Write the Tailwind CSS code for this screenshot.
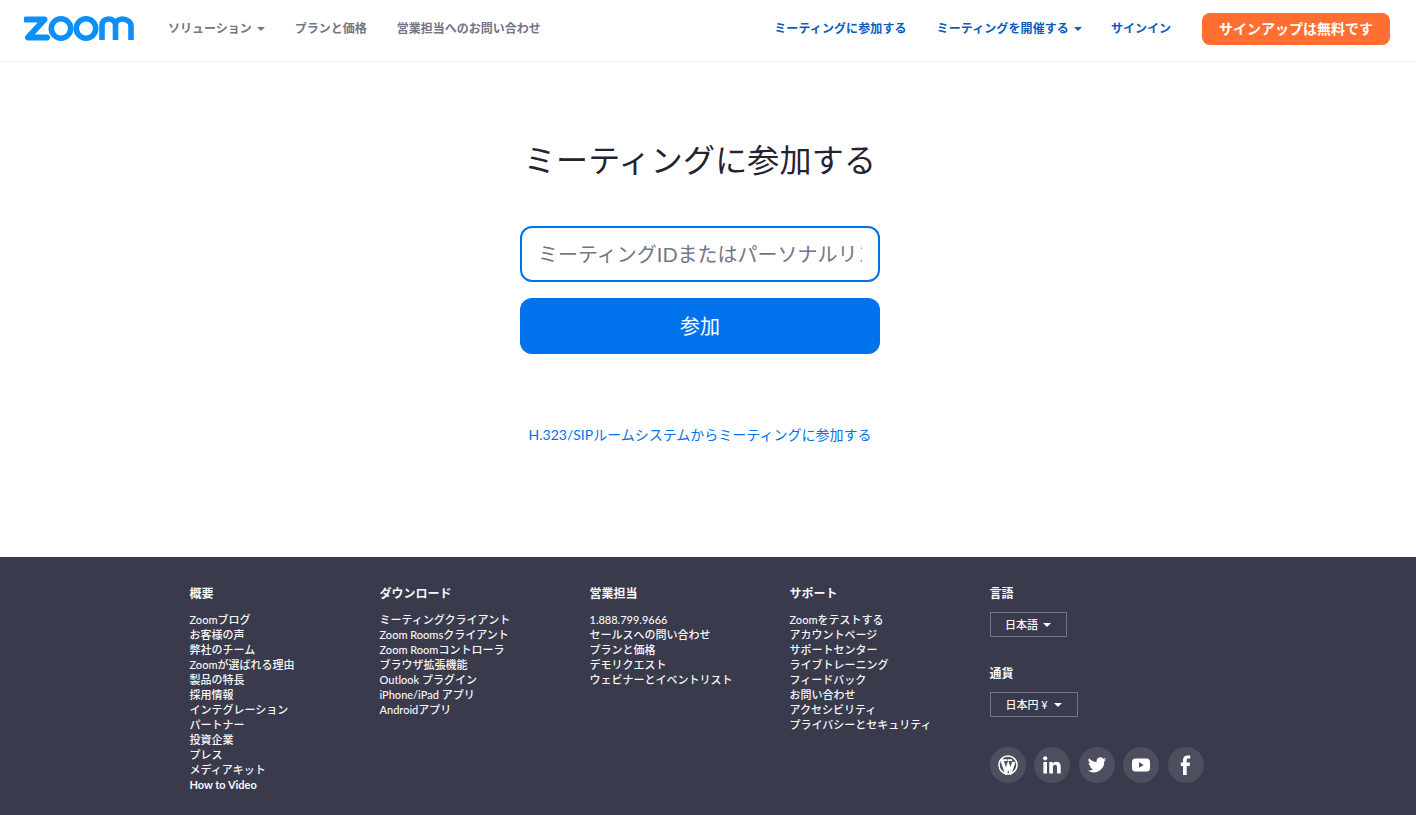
<!DOCTYPE html>
<html lang="ja">
<head>
  <meta charset="UTF-8" />
  <title>ミーティングに参加する - Zoom</title>
  <script src="https://cdn.jsdelivr.net/npm/@tailwindcss/browser@4"></script>
</head>
<body class="bg-white font-['Lato','Noto_Sans_CJK_JP',sans-serif] overflow-hidden">
  <!-- header -->
  <header class="h-[62px] border-b border-[#ededf0] flex items-center justify-between pl-6 pr-[26px] pb-1 text-xs font-bold">
    <div class="flex items-center">
      <svg class="w-[110px] h-[25px] mr-[34px]" viewBox="0 0 110 25" fill="none" stroke="#0b8ffb">
        <path d="M2 3.500H20.500L4 21.500H23" stroke-width="6" stroke-linejoin="round" stroke-linecap="round" />
        <circle cx="37" cy="12.500" r="9.700" stroke-width="5.600" />
        <circle cx="62" cy="12.500" r="9.700" stroke-width="5.600" />
        <path d="M78 24V9.500C78 5.500 80.500 3 84.500 3S91.500 5.500 91.500 9.500V24M91.500 9.500C91.500 5.500 94 3 98 3S107 5.500 107 9.500V24" stroke-width="5.600" />
      </svg>
      <nav class="flex items-center gap-[30px] text-[#747487]">
        <a class="flex items-center">ソリューション<span class="ml-[5px] border-x-4 border-t-4 border-x-transparent border-t-[#747487]"></span></a>
        <a>プランと価格</a>
        <a>営業担当へのお問い合わせ</a>
      </nav>
    </div>
    <div class="flex items-center text-[#0b5cbf]">
      <a class="mr-[30px] tracking-[0.1px]">ミーティングに参加する</a>
      <a class="flex items-center mr-[29px] tracking-[0.1px]">ミーティングを開催する<span class="ml-[5px] border-x-4 border-t-4 border-x-transparent border-t-[#0b5cbf]"></span></a>
      <a class="mr-[31px]">サインイン</a>
      <a class="w-[188px] h-8 rounded-lg bg-[#ff6f31] text-white text-sm flex items-center justify-center">サインアップは無料です</a>
    </div>
  </header>

  <!-- join form -->
  <main class="h-[495px] flex flex-col items-center pt-[75px] pr-4">
    <h1 class="text-[32px] leading-[46px] text-[#232333] tracking-[0.2px] mb-[43px]">ミーティングに参加する</h1>
    <input type="text" class="w-[360px] h-14 border-2 border-[#0072eb] rounded-xl px-4 text-xl outline-none placeholder:text-[#747487]" placeholder="ミーティングIDまたはパーソナルリンク名を入力" />
    <button class="w-[360px] h-14 mt-4 rounded-xl bg-[#0072eb] text-white text-xl">参加</button>
    <a class="mt-[71px] text-sm leading-5 text-[#0072eb]">H.323/SIPルームシステムからミーティングに参加する</a>
  </main>

  <!-- footer -->
  <footer class="h-[258px] bg-[#393a4b] text-[#f7f7fa] pl-[189.5px] pt-[28px] flex text-[11px] leading-[15px] font-medium">
    <div class="w-[190px]">
      <h3 class="text-xs leading-[18px] font-bold mb-[9px]">概要</h3>
      <ul>
        <li>Zoomブログ</li>
        <li>お客様の声</li>
        <li>弊社のチーム</li>
        <li>Zoomが選ばれる理由</li>
        <li>製品の特長</li>
        <li>採用情報</li>
        <li>インテグレーション</li>
        <li>パートナー</li>
        <li>投資企業</li>
        <li>プレス</li>
        <li>メディアキット</li>
        <li class="font-bold">How to Video</li>
      </ul>
    </div>
    <div class="w-[210px]">
      <h3 class="text-xs leading-[18px] font-bold mb-[9px]">ダウンロード</h3>
      <ul>
        <li>ミーティングクライアント</li>
        <li>Zoom Roomsクライアント</li>
        <li>Zoom Roomコントローラ</li>
        <li>ブラウザ拡張機能</li>
        <li>Outlook プラグイン</li>
        <li>iPhone/iPad アプリ</li>
        <li>Androidアプリ</li>
      </ul>
    </div>
    <div class="w-[200px]">
      <h3 class="text-xs leading-[18px] font-bold mb-[9px]">営業担当</h3>
      <ul>
        <li>1.888.799.9666</li>
        <li>セールスへの問い合わせ</li>
        <li>プランと価格</li>
        <li>デモリクエスト</li>
        <li>ウェビナーとイベントリスト</li>
      </ul>
    </div>
    <div class="w-[200px]">
      <h3 class="text-xs leading-[18px] font-bold mb-[9px]">サポート</h3>
      <ul>
        <li>Zoomをテストする</li>
        <li>アカウントページ</li>
        <li>サポートセンター</li>
        <li>ライブトレーニング</li>
        <li>フィードバック</li>
        <li>お問い合わせ</li>
        <li>アクセシビリティ</li>
        <li>プライバシーとセキュリティ</li>
      </ul>
    </div>
    <div>
      <h3 class="text-xs leading-[18px] font-bold mb-[9px]">言語</h3>
      <button class="h-[25px] w-[77px] border border-[#747487] flex items-center justify-center">日本語<span class="ml-[5px] border-x-4 border-t-4 border-x-transparent border-t-white"></span></button>
      <h3 class="text-xs leading-[18px] font-bold mt-[28px] mb-[9px]">通貨</h3>
      <button class="h-[25px] w-[88px] border border-[#747487] flex items-center justify-center">日本円 ¥<span class="ml-[6px] border-x-4 border-t-4 border-x-transparent border-t-white"></span></button>
      <div class="flex gap-[8.5px] mt-[30px]">
        <a class="w-9 h-9 rounded-full bg-[#4d4e5e] flex items-center justify-center">
          <svg class="w-5 h-5" viewBox="0 0 20 20" fill="none" stroke="#fff"><circle cx="10" cy="10" r="9" stroke-width="1.500"/><path d="M4.200 6 8 17 10.200 10.500 12.500 17 15.800 7" stroke-width="3.200"/><path d="M2.500 5.200H9.500M10 5.200H14" stroke-width="1.800"/></svg>
        </a>
        <a class="w-9 h-9 rounded-full bg-[#4d4e5e] flex items-center justify-center">
          <svg class="w-[18px] h-[18px]" viewBox="0 0 18 18" fill="#fff"><circle cx="2.200" cy="2.300" r="2.100"/><rect x=".4" y="6" width="3.600" height="11.500"/><path d="M6.300 6h3.400v1.600c.7-1.100 1.900-1.900 3.500-1.900 3.400 0 4.500 2 4.500 5.300v6.500h-3.600v-5.800c0-1.500-.4-2.900-2-2.900s-2.200 1.300-2.200 2.900v5.800H6.300Z"/></svg>
        </a>
        <a class="w-9 h-9 rounded-full bg-[#4d4e5e] flex items-center justify-center">
          <svg class="w-5 h-5" viewBox="0 0 24 24" fill="#fff"><path d="M23 5.100c-.8.400-1.700.6-2.600.7.900-.6 1.600-1.400 2-2.500-.9.500-1.900.9-2.900 1.100a4.500 4.500 0 0 0-7.800 4.100C8 8.300 4.700 6.500 2.500 3.800a4.500 4.500 0 0 0 1.400 6c-.7 0-1.400-.2-2-.6 0 2.200 1.500 4 3.600 4.500-.7.200-1.400.2-2 .1.600 1.800 2.300 3.100 4.200 3.100A9.100 9.100 0 0 1 1 18.800 12.800 12.800 0 0 0 20.700 7.400c.9-.6 1.700-1.400 2.300-2.300Z"/></svg>
        </a>
        <a class="w-9 h-9 rounded-full bg-[#4d4e5e] flex items-center justify-center">
          <svg class="w-[18px] h-[18px]" viewBox="0 0 18 18"><rect y="2.500" width="18" height="13" rx="3.500" fill="#fff"/><path d="M7 6.300v5.400L11.700 9Z" fill="#4d4e5e"/></svg>
        </a>
        <a class="w-9 h-9 rounded-full bg-[#4d4e5e] flex items-center justify-center">
          <svg class="w-5 h-5" viewBox="0 0 20 20" fill="#fff"><path d="M7 20v-9H4.800V7.500H7V5c0-3 1.700-4.600 4.300-4.600 1.200 0 2.400.1 2.900.1v3.100h-1.800c-1.400 0-1.700.7-1.700 1.600v2.300h3.400l-.5 3.500h-2.900V20Z"/></svg>
        </a>
      </div>
    </div>
  </footer>
</body>
</html>
